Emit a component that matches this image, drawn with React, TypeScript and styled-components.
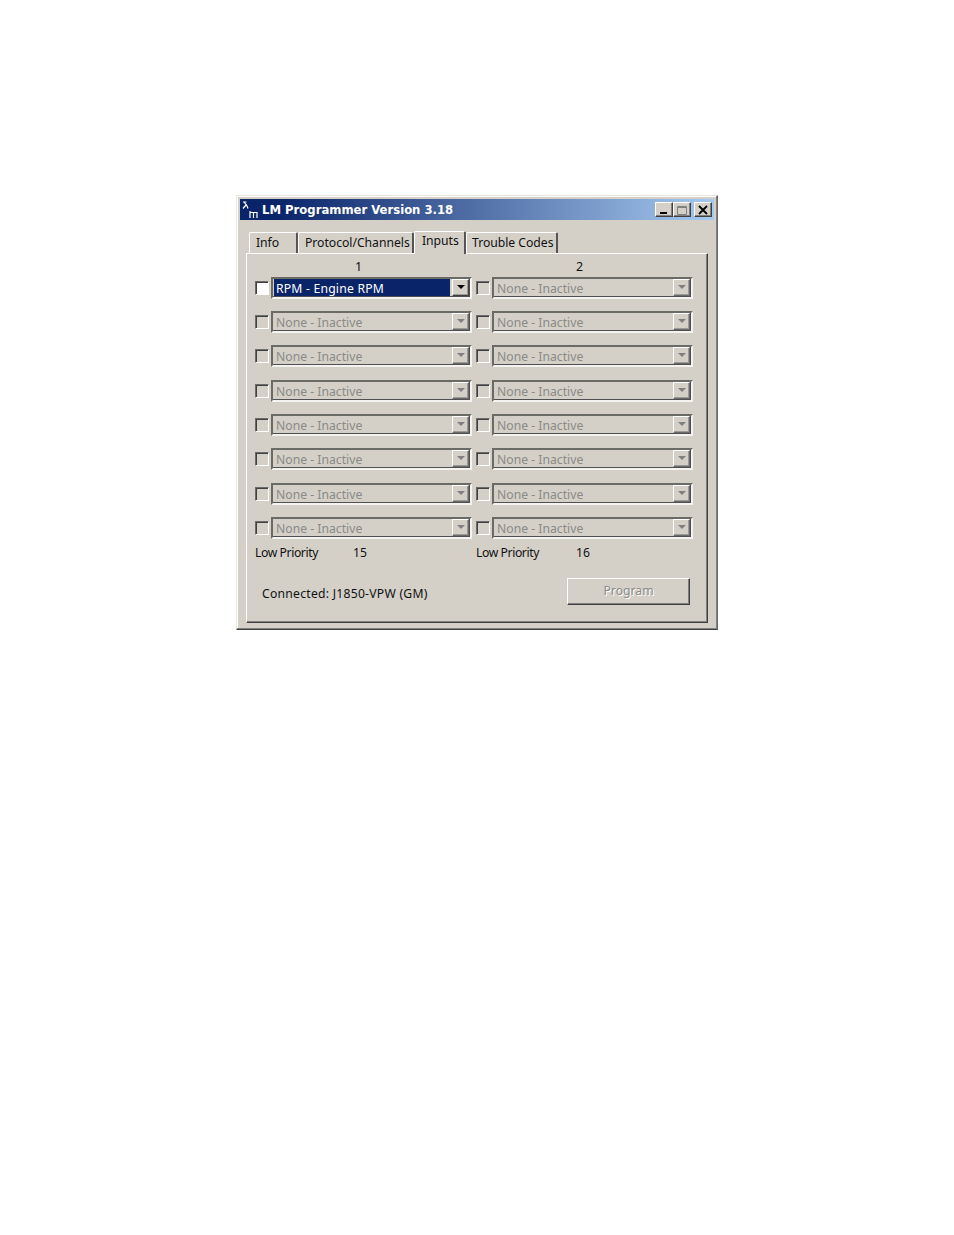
import React from "react";
import styled, { createGlobalStyle } from "styled-components";

const Global = createGlobalStyle`
  html, body { margin: 0; padding: 0; background: #fff; }
  body { font-family: "Noto Sans", "Liberation Sans", Arial, sans-serif; }
`;

const Page = styled.div`
  width: 954px;
  height: 1235px;
  padding: 195px 0 0 236px;
  box-sizing: border-box;
`;

const Window = styled.div`
  width: 482px;
  height: 435px;
  box-sizing: border-box;
  background: #d4d0c8;
  border: 1px solid #808080;
  border-top-color: #e8e6e1;
  border-left-color: #e8e6e1;
  border-right-color: #6a6a6a;
  border-bottom-color: #404040;
  padding: 3px;
  display: flex;
  flex-direction: column;
  box-shadow: inset -1px -1px 0 #808080, inset 1px 1px 0 #fff;
`;

const TitleBar = styled.div`
  height: 21px;
  flex: none;
  display: flex;
  align-items: center;
  background: linear-gradient(90deg, #0a246a 0%, #0a246a 8%, #a6caf0 100%);
  padding-right: 2px;
`;

const Logo = styled.svg`
  width: 21px;
  height: 21px;
  flex: none;
`;

const Title = styled.div`
  flex: 1;
  color: #fff;
  font-family: "DejaVu Sans", sans-serif;
  font-weight: 700;
  font-size: 11.65px;
  margin-left: 1px;
  white-space: nowrap;
`;

const CaptionButton = styled.div<{ $gap?: number }>`
  width: 18px;
  height: 15px;
  box-sizing: border-box;
  margin-left: ${(p) => p.$gap ?? 0}px;
  background: #d4d0c8;
  border: 1px solid;
  border-color: #fff #404040 #404040 #fff;
  box-shadow: inset -1px -1px 0 #808080;
  display: flex;
  align-items: center;
  justify-content: center;
  svg { display: block; }
`;

const Body = styled.div`
  flex: 1;
  padding: 11px 6px 3px 6px;
  display: flex;
  flex-direction: column;
`;

const TabStrip = styled.div`
  display: flex;
  align-items: flex-end;
  height: 22px;
  flex: none;
  padding-left: 3px;
  position: relative;
  z-index: 1;
`;

const Tab = styled.div<{ $w: number; $active?: boolean; $inset?: number }>`
  width: ${(p) => p.$w}px;
  height: ${(p) => (p.$active ? 23 : 21)}px;
  margin-bottom: ${(p) => (p.$active ? -1 : 0)}px;
  box-sizing: border-box;
  background: #d4d0c8;
  border-left: 1px solid #fff;
  border-top: 1px solid #fff;
  border-right: 2px solid #555;
  border-top-left-radius: 2px;
  border-top-right-radius: 2px;
  font-size: 12.2px;
  letter-spacing: -0.03px;
  color: #111;
  padding-left: ${(p) => p.$inset ?? 6}px;
  line-height: ${(p) => (p.$active ? 17 : 19)}px;
  white-space: nowrap;
`;

const Panel = styled.div`
  flex: 1;
  box-sizing: border-box;
  border: 1px solid;
  border-color: #fff #404040 #404040 #fff;
  box-shadow: inset -1px -1px 0 #808080;
  padding: 2px 13px 0 8px;
  display: flex;
  flex-direction: column;
`;

const Columns = styled.div`
  display: grid;
  grid-template-columns: 221px 217px;
  margin-right: -2px;
`;

const ColumnHead = styled.div`
  height: 20.8px;
  font-size: 12.5px;
  line-height: 22px;
  color: #111;
  padding-left: 100px;
`;

const Row = styled.div`
  height: 34.3px;
  display: flex;
  align-items: flex-start;
`;

const Check = styled.div<{ $on?: boolean }>`
  width: 14px;
  height: 14px;
  margin-top: 4px;
  margin-right: 2px;
  flex: none;
  box-sizing: border-box;
  background: ${(p) => (p.$on ? "#fff" : "#d4d0c8")};
  border: 1px solid;
  border-color: #6b6b6b #fff #fff #6b6b6b;
  box-shadow: inset 1px 1px 0 #404040;
`;

const Combo = styled.div`
  width: 201px;
  height: 22px;
  flex: none;
  box-sizing: border-box;
  border: 2px solid;
  border-color: #6b6b65 #f4f3f0 #f4f3f0 #6b6b65;
  box-shadow: inset -1px -1px 0 #505050;
  background: #d4d0c8;
  display: flex;
  align-items: stretch;
  padding: 0 1px 1px 0;
`;

const ComboText = styled.div<{ $on?: boolean }>`
  flex: 1;
  font-size: 12.2px;
  letter-spacing: ${(p) => (p.$on ? 0.2 : 0)}px;
  line-height: 20px;
  height: 17px;
  padding-left: 2px;
  margin: 0 2px 0 1px;
  white-space: nowrap;
  background: ${(p) => (p.$on ? "#0a246a" : "transparent")};
  color: ${(p) => (p.$on ? "#fff" : "#8a8a86")};
`;

const Arrow = styled.div<{ $on?: boolean }>`
  width: 17px;
  flex: none;
  box-sizing: border-box;
  border: 1px solid;
  border-color: #fff ${(p) => (p.$on ? "#404040" : "#6a6a6a")} ${(p) => (p.$on ? "#404040" : "#6a6a6a")} #fff;
  box-shadow: inset -1px -1px 0 #9a9a96;
  display: flex;
  align-items: center;
  justify-content: center;
  padding-bottom: 1px;
  &::after {
    content: "";
    width: 0;
    height: 0;
    border-left: 4px solid transparent;
    border-right: 4px solid transparent;
    border-top: 4px solid ${(p) => (p.$on ? "#000" : "#808080")};
  }
`;

const PriorityRow = styled.div`
  display: grid;
  grid-template-columns: 221px 217px;
  margin-top: -7.2px;
`;

const Priority = styled.div`
  display: flex;
  font-size: 12.2px;
  line-height: 18px;
  color: #111;
`;

const PriorityLabel = styled.span<{ $w: number }>`
  width: ${(p) => p.$w}px;
  letter-spacing: -0.42px;
`;

const Footer = styled.div`
  display: flex;
  justify-content: space-between;
  align-items: flex-start;
  margin-top: 16px;
  padding: 0 4px 0 7px;
`;

const Status = styled.div`
  margin-top: 7px;
  font-size: 12.2px;
  letter-spacing: 0.24px;
  line-height: 18px;
  color: #111;
`;

const ProgramButton = styled.div`
  width: 123px;
  height: 27px;
  box-sizing: border-box;
  background: #d4d0c8;
  border: 1px solid;
  border-color: #fff #404040 #404040 #fff;
  box-shadow: inset -1px -1px 0 #808080;
  text-align: center;
  font-size: 12.2px;
  line-height: 24px;
  color: #8a8a86;
  text-shadow: 1px 1px 0 #fff;
`;

function Cell({ on, label }: { on?: boolean; label: string }) {
  return (
    <Row>
      <Check $on={on} />
      <Combo>
        <ComboText $on={on}>{label}</ComboText>
        <Arrow $on={on} />
      </Combo>
    </Row>
  );
}

const rowIndexes = [0, 1, 2, 3, 4, 5, 6, 7];

export default function App() {
  return (
    <Page>
      <Global />
      <Window>
        <TitleBar>
          <Logo viewBox="0 0 21 21">
            <rect width="21" height="21" fill="#0a246a" />
            <path d="M3 3h3.5M4 3.5c2 1 3 3 4 6M6 6l-3 3.5" stroke="#fff" strokeWidth="1.2" fill="none" />
            <path d="M10 12v7M10 13.5h3.5v5.5M13.5 13.5h3.5v5.5" stroke="#fff" strokeWidth="1.2" fill="none" />
          </Logo>
          <Title>LM Programmer Version 3.18</Title>
          <CaptionButton>
            <svg width="10" height="10" viewBox="0 0 10 10"><rect x="1" y="7" width="7" height="2" fill="#000" /></svg>
          </CaptionButton>
          <CaptionButton>
            <svg width="10" height="10" viewBox="0 0 10 10"><path d="M0.5 1.5h9v8h-9zM0.5 2.5h9" fill="none" stroke="#808080" /></svg>
          </CaptionButton>
          <CaptionButton $gap={3}>
            <svg width="10" height="10" viewBox="0 0 10 10"><path d="M1 1l8 8M9 1l-8 8" stroke="#000" strokeWidth="1.8" /></svg>
          </CaptionButton>
        </TitleBar>
        <Body>
          <TabStrip>
            <Tab $w={49}>Info</Tab>
            <Tab $w={116}>Protocol/Channels</Tab>
            <Tab $w={52} $active $inset={7}>Inputs</Tab>
            <Tab $w={92} $inset={5}>Trouble Codes</Tab>
          </TabStrip>
          <Panel>
            <Columns>
              <ColumnHead>1</ColumnHead>
              <ColumnHead>2</ColumnHead>
              {rowIndexes.map((i) => (
                <React.Fragment key={i}>
                  <Cell on={i === 0} label={i === 0 ? "RPM - Engine RPM" : "None - Inactive"} />
                  <Cell label="None - Inactive" />
                </React.Fragment>
              ))}
            </Columns>
            <PriorityRow>
              <Priority><PriorityLabel $w={98}>Low Priority</PriorityLabel>15</Priority>
              <Priority><PriorityLabel $w={100}>Low Priority</PriorityLabel>16</Priority>
            </PriorityRow>
            <Footer>
              <Status>Connected: J1850-VPW (GM)</Status>
              <ProgramButton>Program</ProgramButton>
            </Footer>
          </Panel>
        </Body>
      </Window>
    </Page>
  );
}
